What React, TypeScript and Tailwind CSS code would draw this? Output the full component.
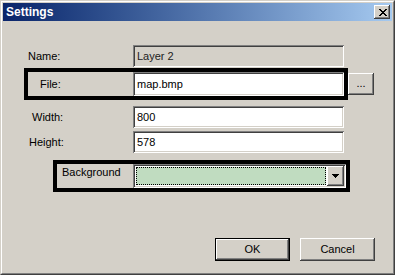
import React from "react";

const raised =
  "shadow-[inset_-1px_-1px_0_#404040,inset_1px_1px_0_#ffffff,inset_-2px_-2px_0_#808080,inset_2px_2px_0_#d4d0c8]";
const sunken =
  "shadow-[inset_1px_1px_0_#808080,inset_-1px_-1px_0_#ffffff,inset_2px_2px_0_#404040,inset_-2px_-2px_0_#d4d0c8]";

function CloseGlyph() {
  const rows = [
    [0, 1, 6, 7],
    [1, 2, 5, 6],
    [2, 3, 4, 5],
    [3, 4],
    [2, 3, 4, 5],
    [1, 2, 5, 6],
    [0, 1, 6, 7],
  ];
  return (
    <svg width="8" height="7" viewBox="0 0 8 7" shapeRendering="crispEdges">
      {rows.map((r, y) =>
        r.map((x) => <rect key={`${x}-${y}`} x={x} y={y} width="1" height="1" fill="#000" />)
      )}
    </svg>
  );
}

function Triangle() {
  return (
    <svg width="7" height="4" viewBox="0 0 7 4" shapeRendering="crispEdges">
      <rect x="0" y="0" width="7" height="1" fill="#000" />
      <rect x="1" y="1" width="5" height="1" fill="#000" />
      <rect x="2" y="2" width="3" height="1" fill="#000" />
      <rect x="3" y="3" width="1" height="1" fill="#000" />
    </svg>
  );
}

function Field({ value, w, h, disabled }: { value: string; w: string; h: string; disabled?: boolean }) {
  return (
    <div
      className={`${w} ${h} ${sunken} ${disabled ? "bg-[#d4d0c8] text-[#222]" : "bg-white text-black"} flex items-center pl-[4px] leading-[13px]`}
    >
      {value}
    </div>
  );
}

export default function App() {
  return (
    <div className="w-[395px] h-[275px] bg-[#d4d0c8] border border-t-[#d4d0c8] border-l-[#d4d0c8] border-r-[#404040] border-b-[#404040] font-['Liberation_Sans',Arial,sans-serif] text-[11px] text-black">
      <div className="h-full border border-t-white border-l-white border-r-[#808080] border-b-[#808080] p-px flex flex-col">
        {/* Title bar */}
        <div className="h-[18px] flex items-center justify-between bg-gradient-to-r from-[#0a246a] to-[#a6caf0] pl-[3px] pr-[2px]">
          <span className="text-white font-bold text-[12px] leading-[14px]">Settings</span>
          <div className={`w-[16px] h-[14px] bg-[#d4d0c8] ${raised} flex items-center justify-center pl-[1px]`}>
            <CloseGlyph />
          </div>
        </div>

        {/* Name */}
        <div className="mt-[24px] ml-[25px] flex items-center h-[22px]">
          <div className="w-[105px]">Name:</div>
          <Field value="Layer 2" w="w-[211px]" h="h-[22px]" disabled />
        </div>

        {/* File group */}
        <div className="mt-[1px] ml-[21px] flex items-center">
          <div className="w-[324px] h-[32px] border-[4px] border-black flex items-center">
            <div className="w-[105px] pl-[12px]">File:</div>
            <Field value="map.bmp" w="w-[211px]" h="h-[24px]" />
          </div>
          <div className={`ml-[0px] w-[26px] h-[22px] bg-[#d4d0c8] ${raised} flex items-center justify-center leading-[11px] pb-[2px]`}>
            ...
          </div>
        </div>

        {/* Width */}
        <div className="mt-[6px] ml-[29px] flex items-center h-[22px]">
          <div className="w-[101px]">Width:</div>
          <Field value="800" w="w-[211px]" h="h-[22px]" />
        </div>

        {/* Height */}
        <div className="mt-[3px] ml-[26px] flex items-center h-[22px]">
          <div className="w-[104px]">Height:</div>
          <Field value="578" w="w-[211px]" h="h-[22px]" />
        </div>

        {/* Background group */}
        <div className="mt-[7px] ml-[50px] w-[297px] h-[32px] border-[4px] border-black flex items-start">
          <div className="w-[76px] pl-[5px] pt-[2px] leading-[13px]">Background</div>
          <div className={`w-[213px] h-[24px] ${sunken} bg-white p-[2px] flex`}>
            <div className="flex-1 p-[1px] bg-white">
              <div className="w-full h-full border border-dotted border-black bg-[#c0dcc0]" />
            </div>
            <div className={`w-[17px] h-full bg-[#d4d0c8] ${raised} flex items-center justify-center`}>
              <Triangle />
            </div>
          </div>
        </div>

        {/* Buttons */}
        <div className="mt-[46px] ml-[212px] flex">
          <div className="w-[75px] h-[23px] border border-black">
            <div className={`w-full h-full bg-[#d4d0c8] ${raised} flex items-center justify-center`}>OK</div>
          </div>
          <div className={`ml-[10px] w-[75px] h-[23px] bg-[#d4d0c8] ${raised} flex items-center justify-center`}>
            Cancel
          </div>
        </div>
      </div>
    </div>
  );
}
